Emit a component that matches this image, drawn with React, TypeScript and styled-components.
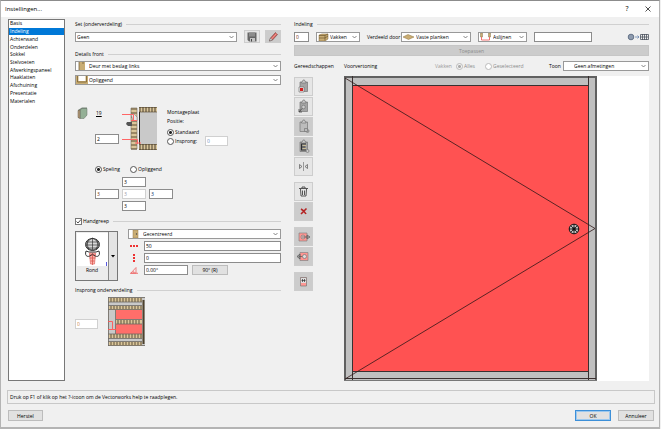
import React, { useState } from "react";
import styled, { createGlobalStyle, css } from "styled-components";

const Global = createGlobalStyle`
  * { box-sizing: border-box; }
  body { margin: 0; background: #f0f0f0; }
  body, button, input, select { font: 5px/8px "Open Sans", "Noto Sans", sans-serif; color: #000; }
`;

const Window = styled.div`
  min-height: 100vh; display: flex; flex-direction: column; background: #f0f0f0;
  border: 1px solid #b4b4b4; border-top-color: #8c8c8c; border-bottom-width: 2px; margin: 0 1px 0 0;
`;
const TitleBar = styled.header`
  display: flex; align-items: center; height: 16px; padding: 0 5px 0 4px; background: #fff;
`;
const Title = styled.h1`margin: 0; flex: 1; font-size: 6px; font-weight: 400;`;
const TitleButton = styled.button`
  border: 0; background: none; padding: 0; width: 12px; height: 12px; margin-left: 9px;
  display: grid; place-items: center; font-size: 7px;
`;
const Main = styled.main`
  flex: 1; display: grid; padding: 2px 10px 0 7px; column-gap: 10px;
  grid-template-columns: 57px minmax(0, 206fr) minmax(0, 358fr);
`;
const Nav = styled.nav`border: 1px solid #777; background: #fff;`;
const NavList = styled.ul`
  list-style: none; margin: 0; padding: 0; height: 85px; display: grid; grid-auto-rows: 1fr;
`;
const NavItem = styled.button<{ $on: boolean }>`
  display: block; width: 100%; height: 100%; border: 0; padding: 0 0 0 1px; text-align: left; line-height: 7px;
  background: ${p => (p.$on ? "#0078d7" : "transparent")}; color: ${p => (p.$on ? "#fff" : "#000")};
`;
const Column = styled.section`display: flex; flex-direction: column; min-width: 0;`;
const RightColumn = styled(Column)`padding-left: 3px;`;
const Heading = styled.h2<{ $top?: number }>`
  display: flex; align-items: center; gap: 4px; height: 10px; margin: ${p => p.$top ?? 0}px 0 0;
  font-size: 5px; font-weight: 400; white-space: nowrap;
  &::after { content: ""; flex: 1; height: 1px; background: #d0d0d0; }
`;
const Row = styled.div<{ $top?: number; $gap?: number; $left?: number }>`
  display: flex; align-items: center; margin-top: ${p => p.$top ?? 0}px; gap: ${p => p.$gap ?? 0}px;
  padding-left: ${p => p.$left ?? 0}px;
`;
const Combo = styled.div<{ $w?: number }>`
  display: flex; align-items: center; height: 10px; background: #fff; border: 1px solid #999; padding-right: 2px;
  ${p => (p.$w ? css`flex: 0 0 ${p.$w}px;` : css`flex: 1; min-width: 0;`)}
  > svg { flex: none; }
`;
const ComboSelect = styled.select<{ $indent: number }>`
  appearance: none; border: 0; background: transparent; outline: 0; margin: 0; height: 8px;
  padding: 0 6px 0 ${p => p.$indent}px; flex: 1; min-width: 0;
`;
const Arrow = styled.svg`margin-left: -6px; pointer-events: none;`;

function Select(p: { label: string; value: string; w?: number; indent?: number; icon?: React.ReactNode }) {
  return (
    <Combo $w={p.w}>
      {p.icon}
      <ComboSelect aria-label={p.label} $indent={p.indent ?? 1}><option>{p.value}</option></ComboSelect>
      <Arrow width="5" height="4" viewBox="0 0 5 4"><path d="M.5 1 2.5 3 4.5 1" fill="none" stroke="#555" strokeWidth=".7" /></Arrow>
    </Combo>
  );
}

const Field = styled.input<{ $w?: number; $tint?: string; $soft?: boolean }>`
  height: 10px; padding: 0 1px; border: 1px solid ${p => (p.$soft ? "#d0d0d0" : "#8c8c8c")}; background: #fff; outline: 0; min-width: 0;
  color: ${p => p.$tint ?? "#000"}; ${p => (p.$w ? css`flex: none; width: ${p.$w}px;` : css`flex: 1;`)}
`;
const SquareButton = styled.button<{ $h: number; $dark?: boolean }>`
  display: grid; place-items: center; padding: 0; border: 1px solid #cdcdcd; flex: none;
  width: ${p => (p.$h > 15 ? 19 : 16)}px; height: ${p => p.$h}px; background: ${p => (p.$dark ? "#cccccc" : "#e6e6e6")};
`;
const PushButton = styled.button<{ $w?: number; $primary?: boolean }>`
  height: 11px; padding: 0; border: 1px solid ${p => (p.$primary ? "#3c8fd8" : "#bcbcbc")}; background: #e1e1e1;
  ${p => p.$primary && css`box-shadow: inset 0 0 0 1px #9cc8ee;`}
  ${p => p.$w && css`width: ${p.$w}px;`}
`;
const ApplyButton = styled(PushButton)`margin-top: 3px; background: #ccc; border-color: #c6c6c6; color: #8b8b8b;`;

const Choice = styled.label<{ $muted?: boolean; $w?: number }>`
  display: inline-flex; align-items: center; gap: 1px; white-space: nowrap; color: ${p => (p.$muted ? "#8a8a8a" : "#000")};
  ${p => p.$w && css`width: ${p.$w}px;`}
`;
const Radio = styled.input.attrs({ type: "radio" })`
  appearance: none; margin: 0; width: 7px; height: 7px; border: 1px solid #555; border-radius: 50%; background: #fff; flex: none;
  &:checked { background: radial-gradient(circle, #222 0 1px, #fff 2px); }
  &:disabled { border-color: #bbb; }
  &:disabled:checked { background: radial-gradient(circle, #aaa 0 1px, #f4f4f4 2px); }
`;
const CheckBox = styled.span`
  display: inline-grid; width: 7px; height: 7px;
  > * { grid-area: 1 / 1; }
  > svg { pointer-events: none; }
`;
const CheckInput = styled.input.attrs({ type: "checkbox" })`
  appearance: none; margin: 0; width: 7px; height: 7px; border: 1px solid #777; background: #fff;
  &:not(:checked) + svg { display: none; }
`;

const Mounting = styled.div`display: flex; margin-top: 22px; align-items: flex-start;`;
const Measures = styled.div`
  display: grid; grid-template-columns: 20px 24px; grid-template-rows: 12px 10px; row-gap: 15px; align-items: center; margin-right: 3px;
  > svg { justify-self: center; margin-right: 6px; }
  > input { grid-column: 2; }
`;
const Thickness = styled.a`color: #000; text-decoration: underline; padding-left: 1px;`;
const PlateOptions = styled.div`
  margin-left: 10px; display: flex; flex-direction: column; flex: 1;
`;
const Line = styled.span`height: 9px; line-height: 10px;`;
const Clearances = styled.div`
  display: grid; grid-template-columns: repeat(3, 24px); grid-auto-rows: 10px; gap: 2px 3px; margin: 4px 0 0 20px;
  > :first-child, > :last-child { grid-column: 2; }
  > :nth-child(2) { grid-column: 1; }
`;
const Handle = styled.div`display: grid; grid-template-columns: 43px minmax(0, 1fr); column-gap: 10px; margin-top: 3px;`;
const HandlePicker = styled.button`
  display: grid; grid-template-columns: 1fr 8px; margin-top: 2px; height: 50px; padding: 0; border: 1px solid #777; background: #e4e4e4;
`;
const Preview = styled.span`
  border-right: 1px solid #888; background: #ececec; display: flex; flex-direction: column; align-items: center; padding-top: 1px;
`;
const Expand = styled.span`display: grid; place-items: center; height: 100%;`;
const HandleFields = styled.div`display: flex; flex-direction: column; gap: 2px;`;
const FieldRow = styled.label`display: grid; grid-template-columns: 16px minmax(0, 1fr); align-items: center; > svg { margin-left: 2px; }`;
const AngleRow = styled.div`display: grid; grid-template-columns: 16px 44px 40px; align-items: center;
  > svg { margin-left: 2px; } > button { margin-left: 4px; height: 10px; }
`;
const InsetRow = styled.div`display: flex; align-items: flex-start; gap: 10px; margin-top: 2px; > input { margin-top: 22px; }`;

const Text = styled.span<{ $w?: number; $muted?: boolean }>`
  white-space: nowrap; color: ${p => (p.$muted ? "#999" : "#000")}; ${p => p.$w && css`flex: 0 0 ${p.$w}px;`}
`;
const Spacer = styled.span`flex: 1;`;
const Workspace = styled.div`
  flex: 1; display: grid; grid-template-columns: 50px minmax(0, 1fr); margin-top: 5px;
`;
const Tools = styled.div`display: flex; flex-direction: column; padding-top: 1px;`;
const ToolGroup = styled.div`display: flex; flex-direction: column; gap: 1px; & + & { margin-top: 6px; }`;
const Canvas = styled.div`background: #fff; display: flex; > svg { width: 100%; height: auto; display: block; }`;
const Help = styled.p`
  margin: 9px 4px 0 6px; border: 1px solid #c8c8c8; height: 14px; line-height: 13px; padding-left: 2px;
`;
const Footer = styled.footer`display: flex; gap: 7px; padding: 6px 5px 6px 7px;`;

const wood = "#c9ad74";
const DoorIcon = () => (
  <svg width="12" height="8" viewBox="0 0 12 8"><path d="M3 0h6v8H3z" fill={wood} /><path d="M3 0v8M7 0v2" stroke="#665331" strokeWidth=".7" /></svg>
);
const OverlayIcon = () => (
  <svg width="12" height="8" viewBox="0 0 12 8"><path d="M0 0h12v8H0z" fill={wood} /><path d="M2.500 0h7v5h-7z" fill="#fff" /><path d="M1.500 0v6h9V0" fill="none" stroke="#7c6334" strokeWidth=".8" /></svg>
);
const PlainDoor = () => (
  <svg width="13" height="8" viewBox="0 0 13 8"><path d="M4 0h5v8H4z" fill={wood} stroke="#98784a" strokeWidth=".5" /><circle cx="7.500" cy="4" r=".7" fill="#444" /></svg>
);
const BoxIcon = () => (
  <svg width="12" height="8" viewBox="0 0 12 8"><path d="M2 2 5 1l6 0v5L8 8H2z" fill={wood} stroke="#806536" strokeWidth=".5" /><path d="M2 2.500h6v5M8 2.500l3-1.500M2 5h6l3-2" fill="none" stroke="#5e4925" strokeWidth=".6" /></svg>
);
const ShelfIcon = () => (
  <svg width="13" height="8" viewBox="0 0 13 8"><path d="m1 4 5-2.500L12 4 6.500 6.500z" fill={wood} stroke="#8c713f" strokeWidth=".5" /></svg>
);
const AxisIcon = () => (
  <svg width="13" height="8" viewBox="0 0 13 8"><path d="M1.500 0h2v4h-2zM9.500 0h2v4h-2z" fill={wood} stroke="#75603a" strokeWidth=".4" /><path d="M2.500 4v3h8V4" fill="none" stroke="#f05050" strokeWidth=".8" /></svg>
);
const SaveIcon = () => (
  <svg width="10" height="10" viewBox="0 0 10 10"><path d="M.5.500h9v9H2L.5 8z" fill="#666" /><path d="M2 .5h6v4H2z" fill="#8d8d8d" /><path d="M3 6h5v3.500H3z" fill="#c4c4c4" /><path d="M4.500 7v2.500" stroke="#444" /></svg>
);
const PencilIcon = () => (
  <svg width="11" height="10" viewBox="0 0 11 10"><path d="m1.500 9 1-3L7.500.500 9.500 2.500 4.500 8z" fill="#d95c57" stroke="#6d4644" strokeWidth=".6" /><path d="m1.500 9 1-3 2 2z" fill="#eee" stroke="#555" strokeWidth=".5" /><path d="m3.500 7 5-5.500" stroke="#f3b0aa" strokeWidth=".8" /></svg>
);
const RenderIcon = () => (
  <svg width="22" height="8" viewBox="0 0 22 8"><circle cx="4" cy="4" r="2.800" fill="#aab6c8" stroke="#4b5a72" strokeWidth=".8" /><path d="M1 3h6M1 5h6M3 1v6M5 1v6" stroke="#6a788e" strokeWidth=".5" /><path d="M8 4h4m-1.500-1.500L12 4l-1.500 1.500" fill="none" stroke="#6a87ae" strokeWidth=".8" /><path d="M13.500 1.500h8v5h-8zM15.500 1v6M17.500 1v6M19.500 1v6M13 4h8" fill="none" stroke="#4c535e" strokeWidth=".8" /></svg>
);
const PanelIcon = () => (
  <svg width="11" height="12" viewBox="0 0 11 12"><path d="m1 3 4-2.500h5V8l-4 3H1z" fill="#78877a" /><path d="m3 3 2-1.500h5V8l-3 3.500H3z" fill="#94b096" stroke="#667267" strokeWidth=".5" /><path d="M1 3.500 3 3v8.500l-2-1z" fill="#b49a77" stroke="#665b4c" strokeWidth=".5" /></svg>
);

const range = (n: number) => Array.from({ length: n }, (_, i) => i);

const MountingDrawing = () => (
  <svg width="35" height="43" viewBox="0 0 35 43" role="img" aria-label="Montageplaat">
    <path d="M17 5h18v33H17z" fill="#c9c9c9" />
    <path d="M17 0h18v5H17zM17 37h18v6H17zM9 1h6v41H9z" fill="#dac69a" />
    <path d="M17 .5h18M17 5h18M17 37.500h18M17 42.500h18" stroke="#62543c" strokeWidth=".7" />
    {range(6).map(i => <path key={i} d={`M${18 + i * 3} 0v5m0 32v6`} stroke="#493d2c" />)}
    {range(11).map(i => <path key={i} d={`M9 ${2 + i * 4}h6`} stroke="#5c4a30" />)}
    <path d="M9 1h6v41H9z" fill="none" stroke="#766b58" strokeWidth=".6" />
    <path d="M17.500 5v32" stroke="#222" />
    <path d="M9 7h3l3 3v4h-4z" fill="#e7e7e7" stroke="#777" strokeWidth=".5" />
    <path d="M5 15h5v4H6l-2-2z" fill="#555" />
    <path d="M0 7.500h11.500v6M9 13.500h6M0 32.500h15.500V37M13 36h6" fill="none" stroke="#f66" strokeWidth="1" />
  </svg>
);
const KnobDrawing = () => (
  <svg width="31" height="33" viewBox="0 0 31 33">
    <path d="M0 0h31v33H0z" fill="#fff" />
    <path d="M12.500 20h6l-1 11h-4z" fill="#ffb5af" stroke="#e3746e" strokeWidth=".8" />
    <path d="M12.500 22h6m-6 3h6m-5 3h4m-2-7v11" stroke="#d65951" strokeWidth=".8" />
    <ellipse cx="15.500" cy="11.500" rx="7" ry="6" fill="#d8d8d8" stroke="#222" strokeWidth=".9" />
    <path d="M15.500 5c-8 4-8 10 0 12 8-2 8-8 0-12v12M9.500 9h12M9 12h13M10 15h11M12 6c-2 3-2 7 0 11m7-11c2 3 2 7 0 11" fill="none" stroke="#222" strokeWidth=".6" />
    <path d="M9 18c-2 6 3 7 6.500 3 3.500 4 8.500 3 6.500-3l-3 1h-7z" fill="none" stroke="#222" strokeWidth=".9" />
    <path d="M29.500 29v4" stroke="#5a5ae0" />
  </svg>
);
const InsetDrawing = () => (
  <svg width="38" height="49" viewBox="0 0 38 49" role="img" aria-label="Insprong">
    <path d="M0 0h37v49H0z" fill="#c9c9c9" />
    <path d="M1 1h33v4H1zM1 9h33v4H1zM8 23h26v4H8zM1 37h33v4H1zM1 45h33v4H1z" fill="#dac69a" />
    {range(11).map(i => <path key={i} d={`M${3 + i * 3} 1v4m0 4v3m0 25v4m0 4v3`} stroke="#5e513b" />)}
    {range(8).map(i => <path key={i} d={`M${10 + i * 3} 23v4`} stroke="#5e513b" />)}
    <path d="M8 13h26v9H8zM8 27h26v10H8z" fill="#ff6e6a" />
    <path d="M0 .5h37M0 5h34M0 8.500h34M0 12.500h34M8 22.500h26M8 27h26M0 37h34M0 41.500h34M0 44.500h34M0 48.500h37M.5 0v49M7.500 13v24" fill="none" stroke="#6c6760" strokeWidth=".8" />
    <path d="M35.500 3v44" stroke="#4d412c" strokeWidth="2" />
    <path d="M0 24.500h4.500V32M0 32.500h8" fill="none" stroke="#f55" strokeWidth=".9" />
  </svg>
);

type ToolKind = "stop" | "find" | "copy" | "paste" | "mirror" | "bin" | "cross" | "out" | "in" | "doc";
const ToolIcon = ({ kind }: { kind: ToolKind }) => (
  <svg width="15" height="15" viewBox="0 0 15 15" fill="none" stroke="#777" strokeWidth=".7">
    {["stop", "find", "copy", "paste"].includes(kind) && (
      <>
        <path d="M4 3h7.500v9.500H4z" fill={kind === "copy" ? "#bcbcbc" : "#a4a4a4"} />
        <path d="M5.500 4V3l1-.5.500-1.500h1.500l.5 1.500 1 .5v1z" fill="#ccc" />
      </>
    )}
    {kind === "stop" && <><path d="M3 8h5v5H3z" fill="#eee" /><path d="M4 9h3v3H4z" fill="#d42020" stroke="none" /></>}
    {kind === "find" && <><circle cx="7.500" cy="8" r="1.800" fill="#ccc" /><path d="m3 13 3-3.500M3 10v3h3" stroke="#333" /></>}
    {kind === "copy" && <><circle cx="11.500" cy="12" r="1.500" fill="#bbb" /><path d="M8.500 9.500h3v3h-3z" fill="#bbb" /></>}
    {kind === "paste" && <><path d="M10 5H5.500v6H10M5.500 8h4" stroke="#303030" strokeWidth="1.100" /><path d="M7 6.500h3M7 9.500h3" stroke="#dbc88c" /><circle cx="11.500" cy="12" r="1.500" fill="#ccc" /></>}
    {kind === "mirror" && <><path d="M7.500 3v9" /><path d="m3.500 5.500 2.500 2-2.500 2zM11.500 5.500 9 7.500l2.500 2z" stroke="#555" /></>}
    {kind === "bin" && <path d="M3 4.500h9M6 4V3h3v1M4.500 5l.5 7h5l.5-7M6.500 6.500V11M8.500 6.500V11" stroke="#444" strokeWidth=".9" />}
    {kind === "cross" && <path d="M5 5c2 1 4 3 5 5M10.500 4.500 5 10" stroke="#b42424" strokeWidth="1.600" />}
    {(kind === "out" || kind === "in") && (
      <>
        <path d={kind === "out" ? "M3 4h8v8H3z" : "M4 3.500h8v8H4z"} fill="#ff9490" stroke="#858585" />
        {kind === "out"
          ? <><circle cx="7" cy="8" r="2" fill="#e9c6c4" /><path d="M6 8h6M11 6l3 2-3 2z" fill="#aaa" stroke="#555" /></>
          : <><path d="M1 7.500 4 5v5zM3 7.500h4" fill="#999" stroke="#555" /><circle cx="8.500" cy="7.500" r="2" fill="#ddd" /></>}
      </>
    )}
    {kind === "doc" && <><path d="M4.500 3.500h6V12h-6z" fill="#ff9894" /><path d="M5 4h5v5H5z" fill="#ddd" stroke="none" /><path d="M6.500 5v3m2-3v3M5.500 6.500h4" stroke="#333" /></>}
  </svg>
);

const toolGroups: { kind: ToolKind; label: string; dark?: boolean }[][] = [
  [
    { kind: "stop", label: "Verwijderen uit klembord" }, { kind: "find", label: "Opnemen" },
    { kind: "copy", label: "Kopiëren", dark: true }, { kind: "paste", label: "Plakken", dark: true }, { kind: "mirror", label: "Spiegelen" },
  ],
  [{ kind: "bin", label: "Wissen" }, { kind: "cross", label: "Sluiten", dark: true }],
  [{ kind: "out", label: "Exporteren", dark: true }, { kind: "in", label: "Importeren", dark: true }],
  [{ kind: "doc", label: "Document", dark: true }],
];

const CabinetDrawing = () => (
  <svg viewBox="0 0 305 305" role="img" aria-label="Voorvertoning" preserveAspectRatio="xMinYMin meet">
    <path d="M0 0h253v305H0z" fill="#c0c0c0" />
    <path d="M8 9h236v286H8z" fill="#ff5252" />
    <path d="M0 1h253M1 0v304M252 0v304" stroke="#606060" strokeWidth="2" />
    <path d="M0 304.500h253" stroke="#777" />
    <path d="M8.500 0v304M244.500 0v304M8 9.500h236M8 295.500h236M2 302.500h250" stroke="#3a3030" strokeWidth="1" />
    <path d="M1 2 251 152.500 1 303" fill="none" stroke="#301818" strokeWidth=".8" />
    <circle cx="230" cy="153" r="4.800" fill="#bbb" stroke="#111" />
    <path d="M225 153h10M230 148v10M226.500 149.500l7 7M233.500 149.500l-7 7" stroke="#111" strokeWidth=".8" />
    <circle cx="230" cy="153" r="1.800" fill="#111" />
  </svg>
);

const pages = ["Basis", "Indeling", "Achterwand", "Onderdelen", "Sokkel", "Stelvoeten", "Afwerkingspaneel", "Haaklatten", "Afschuining", "Presentatie", "Materialen"];

export default function App() {
  const [page, setPage] = useState("Indeling");
  return (
    <>
      <Global />
      <Window>
        <TitleBar>
          <Title>Instellingen...</Title>
          <TitleButton aria-label="Help">?</TitleButton>
          <TitleButton aria-label="Venster sluiten"><svg width="6" height="6" viewBox="0 0 6 6"><path d="m.5.500 5 5m0-5-5 5" stroke="#222" strokeWidth=".8" /></svg></TitleButton>
        </TitleBar>
        <Main>
          <Nav>
            <NavList>
              {pages.map(name => <li key={name}><NavItem $on={page === name} onClick={() => setPage(name)}>{name}</NavItem></li>)}
            </NavList>
          </Nav>

          <Column>
            <Heading>Set (onderverdeling)</Heading>
            <Row $top={1} $gap={7}>
              <Select label="Set" value="Geen" />
              <Row $gap={5}>
                <SquareButton $h={13} aria-label="Opslaan"><SaveIcon /></SquareButton>
                <SquareButton $h={13} $dark aria-label="Bewerken"><PencilIcon /></SquareButton>
              </Row>
            </Row>
            <Heading $top={6}>Details front</Heading>
            <Row $top={2}><Select label="Type front" value="Deur met beslag links" icon={<DoorIcon />} /></Row>
            <Row $top={4}><Select label="Ligging" value="Opliggend" icon={<OverlayIcon />} /></Row>

            <Mounting>
              <Measures>
                <PanelIcon /><Thickness href="#dikte">19</Thickness>
                <Field $w={24} aria-label="Speling scharnier" defaultValue="2" />
              </Measures>
              <MountingDrawing />
              <PlateOptions>
                <Line>Montageplaat</Line>
                <Line>Positie:</Line>
                <Row $top={3}><Choice><Radio name="plate" defaultChecked />Standaard</Choice></Row>
                <Row>
                  <Choice $w={38}><Radio name="plate" />Insprong:</Choice>
                  <Field $w={23} $soft $tint="#6d8fc0" aria-label="Insprong montageplaat" defaultValue="0" />
                </Row>
              </PlateOptions>
            </Mounting>

            <Row $top={15} $left={20}>
              <Choice $w={35}><Radio name="fit" defaultChecked />Speling</Choice>
              <Choice><Radio name="fit" />Opliggend</Choice>
            </Row>
            <Clearances>
              <Field aria-label="Boven" defaultValue="3" />
              <Field aria-label="Links" $tint="#6a2a00" defaultValue="3" />
              <Field aria-label="Midden" $soft $tint="#9595a8" defaultValue="3" />
              <Field aria-label="Rechts" $tint="#002a6a" defaultValue="3" />
              <Field aria-label="Onder" defaultValue="3" />
            </Clearances>

            <Heading $top={5}>
              <Choice>
                <CheckBox><CheckInput defaultChecked /><svg width="7" height="7" viewBox="0 0 7 7"><path d="m1.500 3.500 1.500 1.500 3-3.500" fill="none" stroke="#222" strokeWidth=".8" /></svg></CheckBox>
                Handgreep
              </Choice>
            </Heading>
            <Handle>
              <HandlePicker aria-label="Handgreep: Rond">
                <Preview><KnobDrawing />Rond</Preview>
                <Expand><svg width="4" height="3" viewBox="0 0 4 3"><path d="M0 0h4L2 2.500z" /></svg></Expand>
              </HandlePicker>
              <HandleFields>
                <Row><Select label="Plaatsing" value="Gecentreerd" icon={<PlainDoor />} /></Row>
                <FieldRow>
                  <svg width="9" height="8" viewBox="0 0 9 8"><path d="M0 3h2v2H0zM3 3h2v2H3zM6 3h2v2H6z" fill="#e33" /></svg>
                  <Field aria-label="Horizontale afstand" defaultValue="50" />
                </FieldRow>
                <FieldRow>
                  <svg width="9" height="8" viewBox="0 0 9 8"><path d="M3 0h2v2H3zM3 3h2v2H3zM3 6h2v2H3z" fill="#e33" /></svg>
                  <Field aria-label="Verticale afstand" defaultValue="0" />
                </FieldRow>
                <AngleRow>
                  <svg width="9" height="8" viewBox="0 0 9 8"><path d="M1 7 6 1.500V7zM4 7c0-2-1-2-1-2" fill="none" stroke="#e77" strokeWidth=".9" /><path d="M0 7.300h8" stroke="#e55" strokeWidth=".8" /></svg>
                  <Field $w={44} aria-label="Hoek" defaultValue="0.00°" />
                  <PushButton>90° (R)</PushButton>
                </AngleRow>
              </HandleFields>
            </Handle>

            <Heading $top={4}>Insprong onderverdeling</Heading>
            <InsetRow>
              <Field $w={23} $soft $tint="#c98540" aria-label="Insprong onderverdeling" defaultValue="0" />
              <InsetDrawing />
            </InsetRow>
          </Column>

          <RightColumn>
            <Heading>Indeling</Heading>
            <Row $top={3} $gap={7}>
              <Field $w={15} $tint="#6a2a00" aria-label="Aantal" defaultValue="0" />
              <Select label="Soort" value="Vakken" w={44} icon={<BoxIcon />} />
              <Row>
                <Text $w={34}>Verdeeld door</Text>
                <Select label="Verdeeld door" value="Vaste planken" w={70} icon={<ShelfIcon />} />
              </Row>
              <Select label="Maatvoering" value="Aslijnen" w={49} icon={<AxisIcon />} />
              <Field $w={58} aria-label="Verdeling" defaultValue="" />
              <Spacer />
              <RenderIcon />
            </Row>
            <ApplyButton disabled>Toepassen</ApplyButton>
            <Row $top={5}>
              <Text $w={50}>Gereedschappen</Text>
              <Text $w={91}>Voorvertoning</Text>
              <Text $muted $w={21}>Vakken</Text>
              <Choice $muted $w={29}><Radio name="scope" disabled defaultChecked />Alles</Choice>
              <Choice $muted><Radio name="scope" disabled />Geselecteerd</Choice>
              <Spacer />
              <Text $w={14}>Toon</Text>
              <Select label="Toon" value="Geen afmetingen" w={86} indent={10} />
            </Row>
            <Workspace>
              <Tools>
                {toolGroups.map((group, i) => (
                  <ToolGroup key={i}>
                    {group.map(t => <SquareButton key={t.kind} $h={19} $dark={t.dark} aria-label={t.label}><ToolIcon kind={t.kind} /></SquareButton>)}
                  </ToolGroup>
                ))}
              </Tools>
              <Canvas><CabinetDrawing /></Canvas>
            </Workspace>
          </RightColumn>
        </Main>
        <Help>Druk op F1 of klik op het ?-icoon om de Vectorworks help te raadplegen.</Help>
        <Footer>
          <PushButton $w={35}>Herstel</PushButton>
          <Spacer />
          <PushButton $w={36} $primary>OK</PushButton>
          <PushButton $w={36}>Annuleer</PushButton>
        </Footer>
      </Window>
    </>
  );
}
